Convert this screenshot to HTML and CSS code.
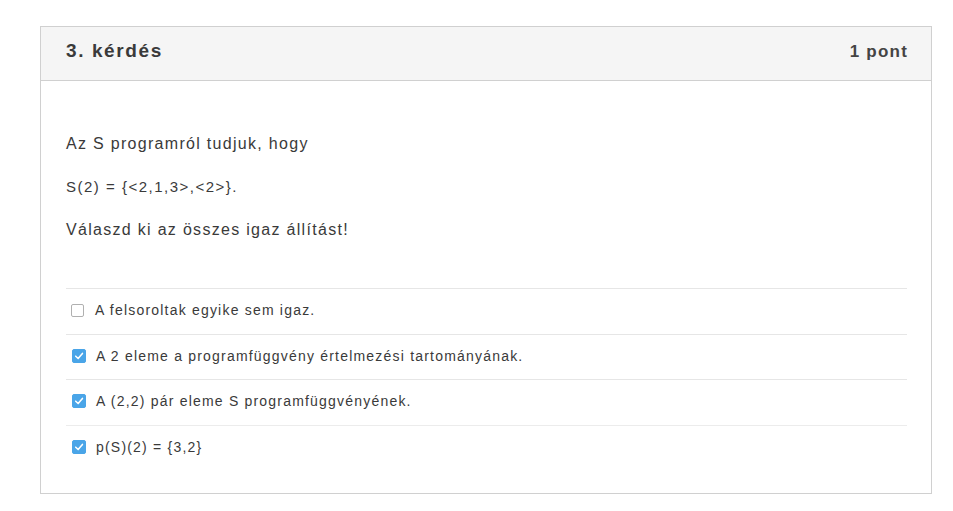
FILE: index.html
```html
<!DOCTYPE html>
<html lang="hu">
<head>
<meta charset="utf-8">
<title>3. kérdés</title>
<link rel="stylesheet" href="styles.css">
</head>
<body>
<div class="card">
  <div class="card-header">
    <h2 class="title">3. kérdés</h2>
    <span class="points">1 pont</span>
  </div>
  <div class="card-body">
    <p class="q">Az S programról tudjuk, hogy</p>
    <p class="q small">S(2) = {&lt;2,1,3&gt;,&lt;2&gt;}.</p>
    <p class="q">Válaszd ki az összes igaz állítást!</p>
    <ul class="answers">
      <li class="answer"><span class="cb"></span><span>A felsoroltak egyike sem igaz.</span></li>
      <li class="answer"><span class="cb checked"><svg viewBox="0 0 14 14" width="14" height="14"><path d="M3.2 7.2 L6 10 L11 4" fill="none" stroke="#fff" stroke-width="1.8" stroke-linecap="round" stroke-linejoin="round"/></svg></span><span>A 2 eleme a programfüggvény értelmezési tartományának.</span></li>
      <li class="answer"><span class="cb checked"><svg viewBox="0 0 14 14" width="14" height="14"><path d="M3.2 7.2 L6 10 L11 4" fill="none" stroke="#fff" stroke-width="1.8" stroke-linecap="round" stroke-linejoin="round"/></svg></span><span>A (2,2) pár eleme S programfüggvényének.</span></li>
      <li class="answer"><span class="cb checked"><svg viewBox="0 0 14 14" width="14" height="14"><path d="M3.2 7.2 L6 10 L11 4" fill="none" stroke="#fff" stroke-width="1.8" stroke-linecap="round" stroke-linejoin="round"/></svg></span><span>p(S)(2) = {3,2}</span></li>
    </ul>
  </div>
</div>
</body>
</html>
```
FILE: styles.css
```css
html, body {
  margin: 0;
  padding: 0;
  background: #fff;
}
body {
  font-family: "Liberation Sans", Arial, Helvetica, sans-serif;
  color: #333;
  padding: 26px 20px 0 40px;
}
.card {
  width: 890px;
  height: 466px;
  border: 1px solid #d0d0d0;
  box-sizing: content-box;
}
.card-header {
  height: 53px;
  background: #f5f5f5;
  border-bottom: 1px solid #d0d0d0;
  display: flex;
  align-items: center;
  justify-content: space-between;
  padding: 0 24px 0 25px;
}
.title {
  margin: 0;
  font-size: 19px;
  letter-spacing: 1.6px;
  font-weight: bold;
  color: #3a3a3a;
  position: relative;
  top: -3px;
}
.points {
  font-size: 17px;
  letter-spacing: 1.2px;
  font-weight: bold;
  color: #444;
  position: relative;
  top: -2px;
  margin-right: -1px;
}
.card-body {
  padding: 54px 24px 0 25px;
}
.q {
  margin: 0 0 25px;
  font-size: 16px;
  letter-spacing: 1.3px;
  line-height: 18px;
  color: #3a3a3a;
}
.q.small {
  font-size: 15px;
  letter-spacing: 1.5px;
}
.answers {
  list-style: none;
  margin: 49px 0 0;
  padding: 0;
}
.answer {
  border-top: 1px solid #e6e6e6;
  height: 42.5px;
  display: flex;
  align-items: center;
  gap: 10px;
  padding-left: 6px;
  padding-bottom: 2px;
  box-sizing: content-box;
  font-size: 14px;
  letter-spacing: 1.2px;
  color: #3a3a3a;
}
.answer:last-child {
  border-top-color: #ececec;
}
.cb {
  width: 13px;
  height: 13px;
  border: 1px solid #b0b0b0;
  border-radius: 2px;
  box-sizing: border-box;
  background: #fff;
  display: inline-flex;
  align-items: center;
  justify-content: center;
  flex: none;
  margin-left: -1px;
  margin-right: 1px;
}
.cb.checked {
  width: 14px;
  height: 14px;
  margin: 0;
  background: #4aa5e8;
  border-color: #4aa5e8;
  border-radius: 2px;
}
.cb svg {
  display: block;
}
```
